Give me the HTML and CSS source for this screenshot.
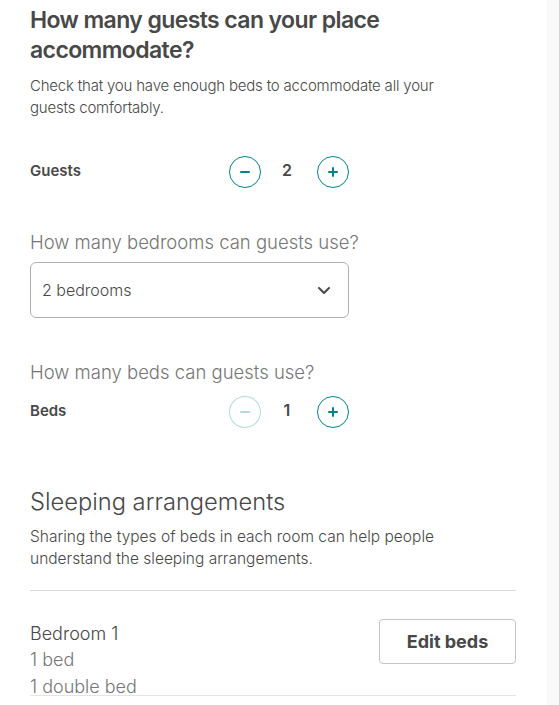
FILE: index.html
```html
<!DOCTYPE html>
<html lang="en">
<head>
<meta charset="utf-8">
<title>Guests</title>
<link rel="stylesheet" href="styles.css">
</head>
<body>
<div class="layout">
  <main class="main">
    <h1 class="title">How many guests can your place accommodate?</h1>
    <p class="lead">Check that you have enough beds to accommodate all your guests comfortably.</p>

    <div class="stepper-row guests-row">
      <span class="stepper-label">Guests</span>
      <div class="stepper">
        <button class="circle" aria-label="decrease">
          <svg width="10" height="10" viewBox="0 0 10 10"><path d="M1 5h8" stroke="#008489" stroke-width="2" stroke-linecap="round"/></svg>
        </button>
        <span class="count">2</span>
        <button class="circle" aria-label="increase">
          <svg width="10" height="10" viewBox="0 0 10 10"><path d="M1 5h8M5 1v8" stroke="#008489" stroke-width="2" stroke-linecap="round"/></svg>
        </button>
      </div>
    </div>

    <h2 class="question q-bedrooms">How many bedrooms can guests use?</h2>
    <div class="select">
      <span>2 bedrooms</span>
      <svg width="16" height="16" viewBox="0 0 16 16"><path d="M3 6l5 5 5-5" fill="none" stroke="#484848" stroke-width="2" stroke-linecap="round" stroke-linejoin="round"/></svg>
    </div>

    <h2 class="question q-beds">How many beds can guests use?</h2>
    <div class="stepper-row beds-row">
      <span class="stepper-label">Beds</span>
      <div class="stepper">
        <button class="circle disabled" aria-label="decrease">
          <svg width="10" height="10" viewBox="0 0 10 10"><path d="M1 5h8" stroke="#008489" stroke-opacity="0.3" stroke-width="2" stroke-linecap="round"/></svg>
        </button>
        <span class="count">1</span>
        <button class="circle" aria-label="increase">
          <svg width="10" height="10" viewBox="0 0 10 10"><path d="M1 5h8M5 1v8" stroke="#008489" stroke-width="2" stroke-linecap="round"/></svg>
        </button>
      </div>
    </div>

    <h2 class="section-title">Sleeping arrangements</h2>
    <div class="section-desc"><p>Sharing the types of beds in each room can help people understand the sleeping arrangements.</p></div>

    <div class="room">
      <div class="room-info">
        <div class="room-name">Bedroom 1</div>
        <div class="room-detail">1 bed</div>
        <div class="room-detail">1 double bed</div>
      </div>
      <button class="edit-btn">Edit beds</button>
    </div>
    <div class="footer-shade"></div>
  </main>
  <aside class="side"></aside>
</div>
</body>
</html>
```

FILE: styles.css
```css
* { box-sizing: border-box; }
html, body { margin: 0; padding: 0; height: 100%; }
body {
  font-family: Inter, "Liberation Sans", Arial, sans-serif;
  color: #484848;
  background: #fff;
  overflow: hidden;
}
.layout { display: flex; height: 705px; }
.main {
  width: 547px;
  flex: none;
  padding: 5px 31px 0 30px;
  position: relative;
}
.side { flex: 1; background: #f9f9f9; }

.title {
  margin: 0;
  font-size: 23px;
  line-height: 30px;
  font-weight: 600;
  letter-spacing: -0.6px;
}
.lead {
  margin: 10px 0 0;
  max-width: 450px;
  font-size: 15px;
  line-height: 22px;
  font-weight: 300;
  letter-spacing: -0.2px;
}

.stepper-row {
  display: flex;
  align-items: center;
  width: 319px;
  justify-content: space-between;
}
.guests-row { margin-top: 37px; }
.beds-row { margin-top: 12px; }
.stepper-label { font-size: 15px; font-weight: 600; margin-top: -4px; }
.stepper { display: flex; align-items: center; }
.circle {
  width: 32px; height: 32px;
  border-radius: 50%;
  border: 1px solid #008489;
  background: #fff;
  padding: 0;
  display: flex; align-items: center; justify-content: center;
}
.circle.disabled { border-color: rgba(0,132,137,0.3); }
.count {
  width: 56px;
  padding-right: 4px;
  text-align: center;
  font-size: 16px;
  font-weight: 600;
  margin-top: -4px;
}

.question {
  margin: 0;
  font-size: 18.5px;
  line-height: 24px;
  font-weight: 300;
  color: #767676;
}
.q-bedrooms { margin-top: 42px; }
.q-beds { margin-top: 42px; }

.select {
  margin-top: 8px;
  width: 319px;
  height: 56px;
  border: 1px solid #b0b0b0;
  border-radius: 6px;
  display: flex;
  align-items: center;
  justify-content: space-between;
  padding: 0 16px 0 11px;
  font-size: 16px;
  font-weight: 300;
}

.section-title {
  margin: 59px 0 0;
  font-size: 23.7px;
  line-height: 30px;
  font-weight: 300;
}
.section-desc {
  margin-top: 9px;
  padding-bottom: 20px;
  border-bottom: 1px solid #dbdbdb;
}
.section-desc p {
  margin: 0;
  max-width: 450px;
  font-size: 15.5px;
  line-height: 22px;
  font-weight: 300;
}

.room {
  display: flex;
  justify-content: space-between;
  align-items: flex-start;
  padding-top: 29px;
}
.room-name { font-size: 18px; line-height: 27px; font-weight: 300; }
.room-detail { font-size: 18px; line-height: 26.5px; font-weight: 300; color: #767676; }
.edit-btn {
  width: 137px;
  height: 45px;
  margin-top: -1px;
  border: 1px solid #c4c4c4;
  border-radius: 4px;
  background: #fff;
  font-family: inherit;
  font-size: 18px;
  font-weight: 700;
  color: #484848;
}
.footer-shade {
  position: absolute;
  left: 30px;
  right: 31px;
  top: 695px;
  height: 10px;
  background: #fff;
  border-top: 1px solid #e4e4e4;
  box-shadow: 0 -12px 14px -10px rgba(0,0,0,0.06);
}
```
